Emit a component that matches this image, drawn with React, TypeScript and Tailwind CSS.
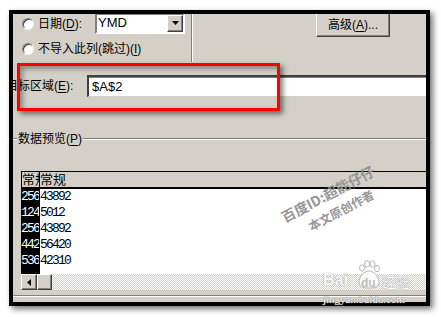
const ui = "font-['Liberation_Sans','Noto_Sans_CJK_SC',sans-serif]"
const mono = "font-['Liberation_Mono',monospace]"
const raised =
  'bg-[#d4d0c8] border border-t-white border-l-white border-b-[#404040] border-r-[#404040] shadow-[inset_-1px_-1px_0_#808080]'
const sunken =
  'border-2 border-t-[#808080] border-l-[#808080] border-b-white border-r-white'

const Radio = () => (
  <span className="shrink-0 w-[12px] h-[12px] rounded-full bg-white border border-t-[#808080] border-l-[#808080] border-b-[#f0f0f0] border-r-[#f0f0f0] shadow-[inset_1px_1px_0_#404040]" />
)

const Key = ({ k }: { k: string }) => (
  <span className="underline underline-offset-2 decoration-1">{k}</span>
)

const rows = [
  ['2564', '43892'],
  ['1245', '5012'],
  ['2564', '43892'],
  ['4425', '56420'],
  ['5364', '42310'],
]

const Paw = () => (
  <svg width="24" height="30" viewBox="0 0 24 30">
    <g fill="#fafafa" stroke="#b8b8b8" strokeWidth="1">
      <ellipse cx="5" cy="8" rx="2.5" ry="3.2" />
      <ellipse cx="10" cy="4" rx="2.6" ry="3.3" />
      <ellipse cx="15.5" cy="4" rx="2.6" ry="3.3" />
      <ellipse cx="20" cy="8.5" rx="2.5" ry="3.2" />
      <path d="M12 11 C6 11 2 18 2 22 C2 27 6 28 12 28 C18 28 22 27 22 22 C22 18 18 11 12 11 Z" />
    </g>
  </svg>
)

export default function App() {
  return (
    <div className={`relative w-[441px] h-[317px] overflow-hidden bg-white pt-[10px] pl-[9px] ${ui}`}>
      <div className="w-[421px] h-[296px] border-4 border-black bg-[#d4d0c8] overflow-hidden shadow-[3px_3px_6px_rgba(0,0,0,0.55)] flex flex-col text-[12px] text-black">
        {/* import options */}
        <div className="flex h-[49px] shrink-0">
          <div className="w-[178px] flex flex-col">
            <div className="flex items-center h-[20px]">
              <div className="flex items-center gap-[4px] w-[82px] pl-[9px]">
                <Radio />
                <span>
                  日期(<Key k="D" />):
                </span>
              </div>
              <div className={`-mt-[2px] w-[90px] h-[21px] bg-white flex items-center ${sunken}`}>
                <span className="pl-[1px] text-[13px]">YMD</span>
                <span className={`ml-auto w-[16px] h-[17px] flex items-center justify-center ${raised}`}>
                  <svg width="7" height="4" viewBox="0 0 7 4">
                    <path d="M0 0h7L3.5 4z" fill="#000" />
                  </svg>
                </span>
              </div>
            </div>
            <div className="mt-[5px] flex items-center h-[20px] gap-[4px] pl-[9px]">
              <Radio />
              <span>
                不导入此列(跳过)(<Key k="I" />)
              </span>
            </div>
          </div>
          <div className="w-[2px] h-[48px] border-l border-l-[#808080] border-r border-r-white" />
          <button className={`ml-[123px] -mt-[1px] w-[74px] h-[24px] flex items-center justify-center ${raised}`}>
            高级(<Key k="A" />)...
          </button>
        </div>

        {/* target */}
        <div className="mt-[12px] flex items-center h-[22px] shrink-0">
          <span className="-ml-[7px] w-[81px] shrink-0 whitespace-nowrap">
            目标区域(<Key k="E" />):
          </span>
          <div className="flex-1 -mr-[1px] h-[22px] bg-white border-t-2 border-l-2 border-t-[#404040] border-l-[#404040] border-b border-b-[#d4d0c8] shadow-[inset_0_1px_0_#808080] flex items-center">
            <span className="pl-[3px] text-[13px]">$A$2</span>
          </div>
        </div>

        {/* preview group */}
        <div className="mt-[34px] flex items-center h-[16px] shrink-0">
          <div className="w-[4px] h-[2px] border-t border-t-[#808080] border-b border-b-white" />
          <span className="pl-[1px] pr-[1px]">
            数据预览(<Key k="P" />)
          </span>
          <div className="flex-1 h-[2px] border-t border-t-[#808080] border-b border-b-white" />
        </div>

        <div className="mt-[24px] ml-[8px] -mr-[1px] flex flex-col shrink-0">
          <div className="flex h-[18px] border-t border-t-black border-b-2 border-b-black bg-[#d4d0c8] leading-[15px] text-[13px]">
            <div className="w-[19px] border-l border-r border-black overflow-hidden whitespace-nowrap">常规</div>
            <div className="pl-0">常规</div>
          </div>
          {rows.map(([a, b], i) => (
            <div key={i} className={`flex h-[16px] bg-white leading-[16px] text-[13px] tracking-[-1.8px] ${mono}`}>
              <div className="w-[19px] bg-black text-white border-r border-black overflow-hidden whitespace-nowrap">
                {a}
              </div>
              <div>{b}</div>
            </div>
          ))}
          <div className="flex h-[5px] bg-white">
            <div className="w-[19px] bg-black" />
          </div>
          <div className="flex h-[16px]">
            <div className={`w-[16px] h-[16px] flex items-center justify-center ${raised}`}>
              <svg width="4" height="7" viewBox="0 0 4 7">
                <path d="M4 0v7L0 3.5z" fill="#000" />
              </svg>
            </div>
            <div className={`w-[15px] h-[16px] ${raised}`} />
            <div className="flex-1 bg-[image:repeating-conic-gradient(#d4d0c8_0%_25%,#ffffff_0%_50%)] bg-[length:2px_2px]" />
          </div>
        </div>
        <div className="mt-[5px] h-[2px] border-t border-t-[#808080] border-b border-b-white shrink-0" />
      </div>

      {/* annotation box */}
      <div className="absolute left-[17px] top-[63px] w-[263px] h-[48px] border-[3px] border-[#ff0000] shadow-[3px_3px_5px_rgba(0,0,0,0.5),inset_3px_3px_5px_rgba(0,0,0,0.35)]" />

      {/* watermarks */}
      <div className="absolute left-[328px] top-[194px] -translate-x-1/2 -translate-y-1/2 -rotate-[28deg] whitespace-nowrap text-[14px] font-bold text-[#8c8c8c] opacity-90 font-['Noto_Sans_CJK_SC',sans-serif]">
        百度ID:超能仔仔
      </div>
      <div className="absolute left-[341px] top-[210px] -translate-x-1/2 -translate-y-1/2 -rotate-[28deg] whitespace-nowrap text-[12px] font-bold text-[#8c8c8c] opacity-90 font-['Noto_Sans_CJK_SC',sans-serif]">
        本文原创作者
      </div>
      <div className="absolute left-[323px] top-[272px] text-[16px] font-bold leading-none text-[#fafafa] [text-shadow:0_0_1px_#9a9a9a,0_0_1px_#9a9a9a] font-['Liberation_Sans',sans-serif]">
        Bai
      </div>
      <div className="absolute left-[357px] top-[260px]">
        <Paw />
      </div>
      <div className="absolute left-[361px] top-[277px] text-[12px] font-bold leading-none text-[#bdbdbd] font-['Liberation_Sans',sans-serif]">
        du
      </div>
      <div className="absolute left-[382px] top-[275px] text-[14px] leading-none text-[#fafafa] [text-shadow:0_0_1px_#9a9a9a,0_0_1px_#9a9a9a] font-['Noto_Sans_CJK_SC',sans-serif]">
        经验
      </div>
      <div className="absolute left-[323px] top-[294px] text-[11px] leading-none text-[#f4f4f4] [text-shadow:0_0_1px_#8a8a8a,0_0_1px_#8a8a8a] font-['Liberation_Serif',serif]">
        jingyan.baidu.com
      </div>
    </div>
  )
}
